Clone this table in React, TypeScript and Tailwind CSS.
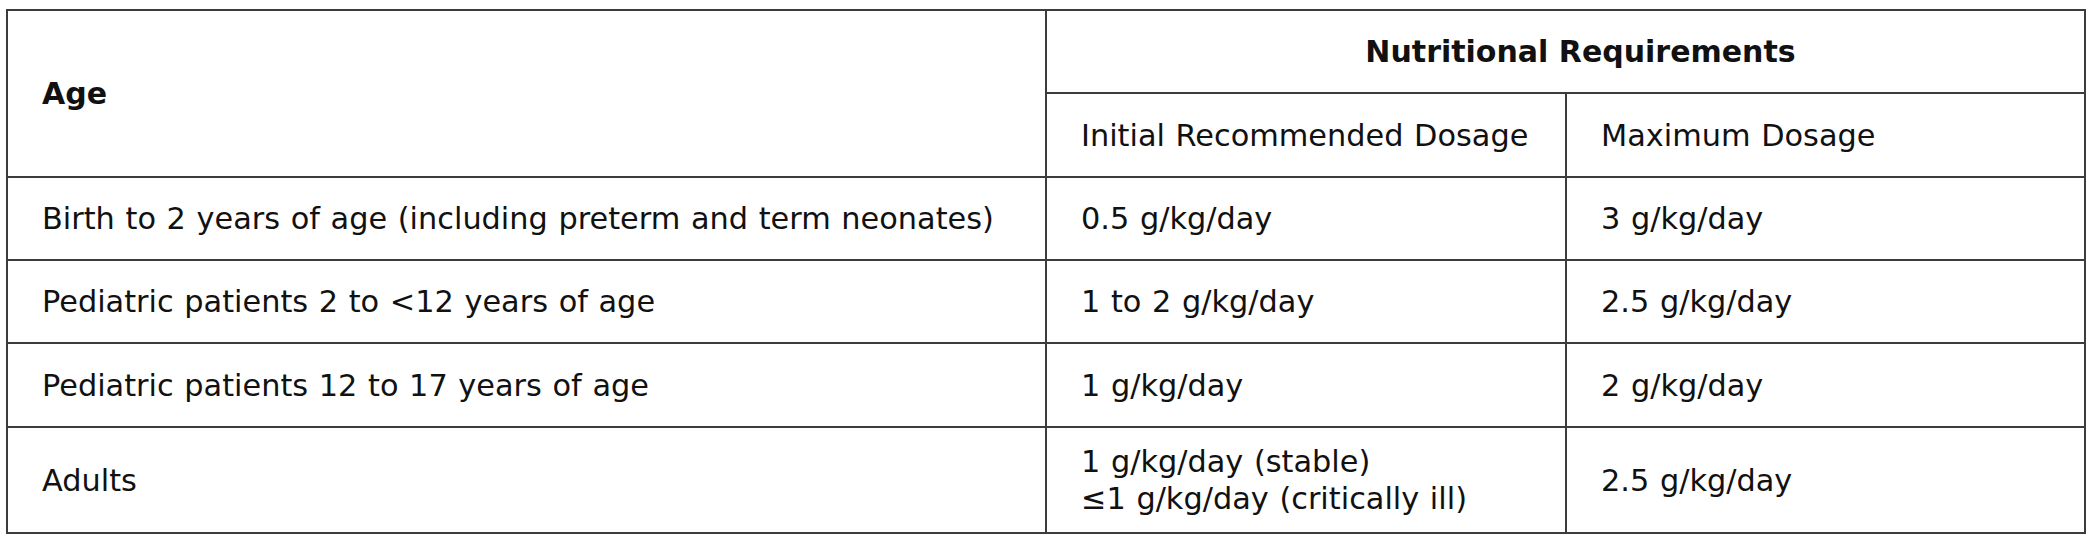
import React from "react";

const rows: { age: string; initial: string[]; max: string; h: string }[] = [
  { age: "Birth to 2 years of age (including preterm and term neonates)", initial: ["0.5 g/kg/day"], max: "3 g/kg/day", h: "h-[83px]" },
  { age: "Pediatric patients 2 to <12 years of age", initial: ["1 to 2 g/kg/day"], max: "2.5 g/kg/day", h: "h-[83px]" },
  { age: "Pediatric patients 12 to 17 years of age", initial: ["1 g/kg/day"], max: "2 g/kg/day", h: "h-[84px]" },
  { age: "Adults", initial: ["1 g/kg/day (stable)", "\u22641 g/kg/day (critically ill)"], max: "2.5 g/kg/day", h: "h-[106px]" },
];

const cell = "border-2 border-[#3c3c3c] pl-[34px] align-middle leading-[37px]";

export default function App() {
  return (
    <div className="w-[2090px] h-[545px] bg-white pl-[6px] pt-[9px] font-['DejaVu_Sans',_'Verdana',_sans-serif] text-[30.35px] [word-spacing:1px] text-[#111]">
      <table className="table-fixed border-collapse border-2 border-[#3c3c3c] w-[2078px]">
        <colgroup>
          <col className="w-[1039px]" />
          <col className="w-[520px]" />
          <col className="w-[519px]" />
        </colgroup>
        <thead>
          <tr className="h-[83px]">
            <th rowSpan={2} className={`${cell} text-left font-bold text-[30px] [word-spacing:0px]`}>
              Age
            </th>
            <th colSpan={2} className="border-2 border-[#3c3c3c] pl-[35px] pr-[5px] text-center align-middle font-bold leading-[37px] text-[30px] [word-spacing:0px]">
              Nutritional Requirements
            </th>
          </tr>
          <tr className="h-[84px]">
            <th className={`${cell} text-left font-normal`}>Initial Recommended Dosage</th>
            <th className={`${cell} text-left font-normal`}>Maximum Dosage</th>
          </tr>
        </thead>
        <tbody>
          {rows.map((r) => (
            <tr key={r.age} className={r.h}>
              <td className={cell}>{r.age}</td>
              <td className={cell}>
                {r.initial.map((l) => (
                  <div key={l}>{l}</div>
                ))}
              </td>
              <td className={cell}>{r.max}</td>
            </tr>
          ))}
        </tbody>
      </table>
    </div>
  );
}
